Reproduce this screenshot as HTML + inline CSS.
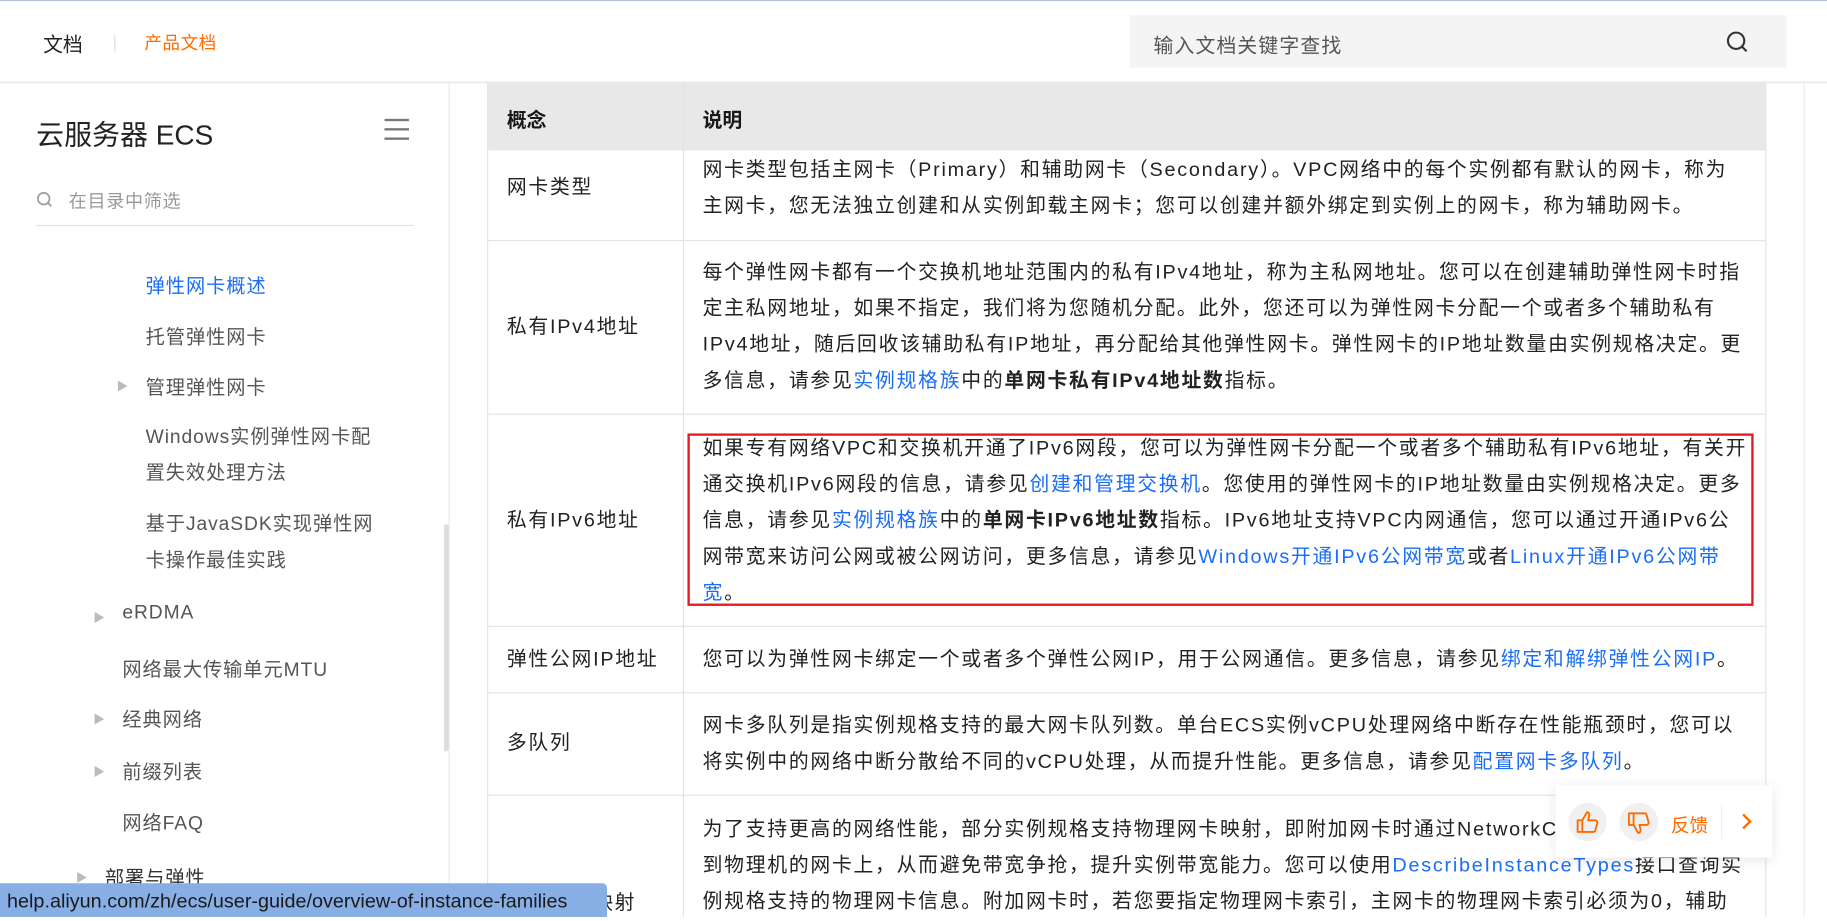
<!DOCTYPE html>
<html><head><meta charset="utf-8"><style>
*{margin:0;padding:0;box-sizing:border-box}
html,body{width:1827px;height:917px;overflow:hidden;background:#fff}
#w{position:absolute;left:0;top:0;width:1568px;height:787px;transform:scale(1.16518);transform-origin:0 0;font-family:"Liberation Sans","Noto Sans CJK SC",sans-serif;color:#181818}
.a{position:absolute;white-space:nowrap}
a{color:#1b6ef3;text-decoration:none}
.t{font-size:17px;line-height:31px;color:#222;letter-spacing:1.5px}
.s{font-size:16.5px;color:#555;letter-spacing:0.8px}
.hl{position:absolute;height:1px;background:#e3e3e3}
.vl{position:absolute;width:1px;background:#e3e3e3}
</style></head><body><div id="w">
<div class="hl" style="left:0;top:0;width:1568px;background:#b9c3d8"></div>
<div class="a" style="left:37px;top:24px;font-size:17px;color:#222">文档</div>
<div class="a" style="left:98px;top:30px;width:1px;height:14px;background:#ddd"></div>
<div class="a" style="left:124px;top:26px;font-size:15px;color:#ff6a00;letter-spacing:0.5px">产品文档</div>
<div class="a" style="left:970px;top:13px;width:563px;height:45px;background:#f4f4f5"></div>
<div class="a" style="left:990px;top:25px;font-size:17px;color:#555;letter-spacing:1px">输入文档关键字查找</div>
<svg class="a" style="left:1481px;top:26px" width="20" height="20" viewBox="0 0 20 20"><circle cx="9" cy="9" r="7" fill="none" stroke="#333" stroke-width="1.8"/><path d="M14 14l4 4" stroke="#333" stroke-width="1.8"/></svg>
<div class="hl" style="left:0;top:70px;width:1568px;background:#e6e6e6;box-shadow:0 1px 2px rgba(0,0,0,.05)"></div>

<div class="vl" style="left:385px;top:71px;height:716px;background:#e8e8e8"></div>
<div class="a" style="left:31px;top:96px;font-size:24px;color:#222">云服务器 ECS</div>
<div class="a" style="left:330px;top:102px;width:21px;height:2px;background:#777;box-shadow:0 8px 0 #777,0 16px 0 #777"></div>
<svg class="a" style="left:31px;top:164px" width="15" height="15" viewBox="0 0 15 15"><circle cx="6.5" cy="6.5" r="5" fill="none" stroke="#999" stroke-width="1.4"/><path d="M10 10l3 3" stroke="#999" stroke-width="1.4"/></svg>
<div class="a" style="left:59px;top:161px;font-size:15.5px;color:#999;letter-spacing:0.6px">在目录中筛选</div>
<div class="hl" style="left:31px;top:193px;width:324px;background:#e2e2e2"></div>
<div class="a s" style="left:125px;top:232px;color:#1b6ef3">弹性网卡概述</div>
<div class="a s" style="left:125px;top:276px">托管弹性网卡</div>
<div class="a" style="left:100px;top:323px;font-size:10px;color:#bbb">▶</div>
<div class="a s" style="left:125px;top:319px">管理弹性网卡</div>
<div class="a s" style="left:125px;top:360px;line-height:31px">Windows实例弹性网卡配<br>置失效处理方法</div>
<div class="a s" style="left:125px;top:435px;line-height:31px">基于JavaSDK实现弹性网<br>卡操作最佳实践</div>
<div class="a" style="left:80px;top:522px;font-size:10px;color:#bbb">▶</div>
<div class="a s" style="left:105px;top:517px">eRDMA</div>
<div class="a s" style="left:105px;top:561px">网络最大传输单元MTU</div>
<div class="a" style="left:80px;top:609px;font-size:10px;color:#bbb">▶</div>
<div class="a s" style="left:105px;top:604px">经典网络</div>
<div class="a" style="left:80px;top:654px;font-size:10px;color:#bbb">▶</div>
<div class="a s" style="left:105px;top:649px">前缀列表</div>
<div class="a s" style="left:105px;top:693px">网络FAQ</div>
<div class="a" style="left:65px;top:745px;font-size:10px;color:#bbb">▶</div>
<div class="a s" style="left:90px;top:740px;color:#333">部署与弹性</div>
<div class="a" style="left:381px;top:450px;width:4px;height:195px;background:#ddd;border-radius:2px"></div>

<div class="a" style="left:418px;top:71px;width:1097px;height:57px;background:#e8e8e8"></div>
<div class="vl" style="left:418px;top:71px;height:716px"></div>
<div class="vl" style="left:586px;top:71px;height:716px"></div>
<div class="vl" style="left:1515px;top:71px;height:716px"></div>
<div class="vl" style="left:1548px;top:71px;height:716px;background:#ececec"></div>
<div class="hl" style="left:418px;top:128px;width:1097px"></div>
<div class="hl" style="left:418px;top:206px;width:1097px"></div>
<div class="hl" style="left:418px;top:355px;width:1097px"></div>
<div class="hl" style="left:418px;top:537px;width:1097px"></div>
<div class="hl" style="left:418px;top:594px;width:1097px"></div>
<div class="hl" style="left:418px;top:682px;width:1097px"></div>
<div class="a" style="left:435px;top:89px;font-size:17px;font-weight:bold">概念</div>
<div class="a" style="left:603px;top:89px;font-size:17px;font-weight:bold">说明</div>

<div class="a t" style="left:435px;top:145px">网卡类型</div>
<div class="a t" style="left:603px;top:130px">网卡类型包括主网卡（Primary）和辅助网卡（Secondary）。VPC网络中的每个实例都有默认的网卡，称为<br>主网卡，您无法独立创建和从实例卸载主网卡；您可以创建并额外绑定到实例上的网卡，称为辅助网卡。</div>

<div class="a t" style="left:435px;top:265px">私有IPv4地址</div>
<div class="a t" style="left:603px;top:218px">每个弹性网卡都有一个交换机地址范围内的私有IPv4地址，称为主私网地址。您可以在创建辅助弹性网卡时指<br>定主私网地址，如果不指定，我们将为您随机分配。此外，您还可以为弹性网卡分配一个或者多个辅助私有<br>IPv4地址，随后回收该辅助私有IP地址，再分配给其他弹性网卡。弹性网卡的IP地址数量由实例规格决定。更<br>多信息，请参见<a>实例规格族</a>中的<b>单网卡私有IPv4地址数</b>指标。</div>

<div class="a t" style="left:435px;top:431px">私有IPv6地址</div>
<div class="a" style="left:590px;top:372px;width:915px;height:148px;border:2px solid #e5191d"></div>
<div class="a t" style="left:603px;top:369px">如果专有网络VPC和交换机开通了IPv6网段，您可以为弹性网卡分配一个或者多个辅助私有IPv6地址，有关开<br>通交换机IPv6网段的信息，请参见<a>创建和管理交换机</a>。您使用的弹性网卡的IP地址数量由实例规格决定。更多<br>信息，请参见<a>实例规格族</a>中的<b>单网卡IPv6地址数</b>指标。IPv6地址支持VPC内网通信，您可以通过开通IPv6公<br>网带宽来访问公网或被公网访问，更多信息，请参见<a>Windows开通IPv6公网带宽</a>或者<a>Linux开通IPv6公网带<br>宽</a>。</div>

<div class="a t" style="left:435px;top:550px">弹性公网IP地址</div>
<div class="a t" style="left:603px;top:550px">您可以为弹性网卡绑定一个或者多个弹性公网IP，用于公网通信。更多信息，请参见<a>绑定和解绑弹性公网IP</a>。</div>

<div class="a t" style="left:435px;top:622px">多队列</div>
<div class="a t" style="left:603px;top:607px">网卡多队列是指实例规格支持的最大网卡队列数。单台ECS实例vCPU处理网络中断存在性能瓶颈时，您可以<br>将实例中的网络中断分散给不同的vCPU处理，从而提升性能。更多信息，请参见<a>配置网卡多队列</a>。</div>

<div class="a t" style="left:435px;top:759px">物理网卡映射</div>
<div class="a t" style="left:603px;top:696px">为了支持更高的网络性能，部分实例规格支持物理网卡映射，即附加网卡时通过NetworkCardIndex参数绑定<br>到物理机的网卡上，从而避免带宽争抢，提升实例带宽能力。您可以使用<a>DescribeInstanceTypes</a>接口查询实<br>例规格支持的物理网卡信息。附加网卡时，若您要指定物理网卡索引，主网卡的物理网卡索引必须为0，辅助</div>

<div class="a" style="left:1335px;top:674px;width:186px;height:62px;background:#fff;box-shadow:0 2px 10px rgba(0,0,0,.1)"></div>
<div class="a" style="left:1346px;top:689px;width:33px;height:33px;border-radius:50%;background:#f0f0f0"></div>
<div class="a" style="left:1390px;top:689px;width:33px;height:33px;border-radius:50%;background:#f0f0f0"></div>
<svg class="a" style="left:1353px;top:696px" width="19" height="19" viewBox="0 0 19 19" fill="none" stroke="#ff6a00" stroke-width="1.6" stroke-linejoin="round"><path d="M1 8h4v10H1zM5 8l4-7c2 0 2 2 2 3l-1 4h6c1 0 2 1 2 2l-2 7c0 1-1 1-2 1H5"/></svg>
<svg class="a" style="left:1397px;top:697px" width="19" height="19" viewBox="0 0 19 19" fill="none" stroke="#ff6a00" stroke-width="1.6" stroke-linejoin="round"><path d="M1 1h4v10H1zM5 11l4 7c2 0 2-2 2-3l-1-4h6c1 0 2-1 2-2l-2-7c0-1-1-1-2-1H5"/></svg>
<div class="a" style="left:1434px;top:695px;font-size:16px;color:#ff6a00">反馈</div>
<div class="a" style="left:1477px;top:692px;width:1px;height:28px;background:#eee"></div>
<svg class="a" style="left:1494px;top:697px" width="10" height="16" viewBox="0 0 10 16"><path d="M2 2l6 6-6 6" fill="none" stroke="#ff6a00" stroke-width="2"/></svg>

<div class="a" style="left:0;top:758px;width:521px;height:29px;background:#88aee6;border-radius:0 4px 0 0"></div>
<div class="a" style="left:6px;top:764px;font-size:17px;color:#1a1a1a">help.aliyun.com/zh/ecs/user-guide/overview-of-instance-families</div>
</div></body></html>
